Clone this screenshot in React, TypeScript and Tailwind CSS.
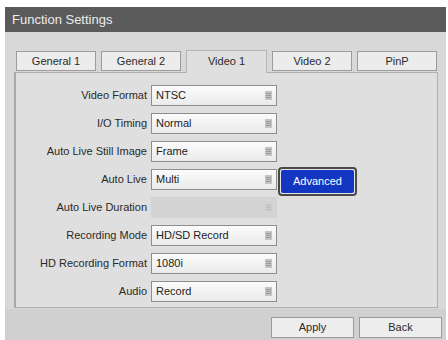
import React from "react";

const rows: { label: string; value: string; disabled?: boolean; advanced?: boolean }[] = [
  { label: "Video Format", value: "NTSC" },
  { label: "I/O Timing", value: "Normal" },
  { label: "Auto Live Still Image", value: "Frame" },
  { label: "Auto Live", value: "Multi", advanced: true },
  { label: "Auto Live Duration", value: "", disabled: true },
  { label: "Recording Mode", value: "HD/SD Record" },
  { label: "HD Recording Format", value: "1080i" },
  { label: "Audio", value: "Record" },
];

const tabs = ["General 1", "General 2", "Video 1", "Video 2", "PinP"];

function Grip({ faint }: { faint?: boolean }) {
  return (
    <div
      className={`w-[7px] h-[9px] flex flex-col justify-center gap-[1px] px-[1px] ${
        faint ? "bg-[#cfcfcf]" : "bg-[#c4c4c4]"
      }`}
    >
      <div className={`h-[1px] ${faint ? "bg-[#bdbdbd]" : "bg-[#9a9a9a]"}`} />
      <div className={`h-[1px] ${faint ? "bg-[#bdbdbd]" : "bg-[#9a9a9a]"}`} />
      <div className={`h-[1px] ${faint ? "bg-[#bdbdbd]" : "bg-[#9a9a9a]"}`} />
    </div>
  );
}

export default function App() {
  return (
    <div
      className="w-[448px] h-[340px] bg-white pl-[5px] pt-[7px] pr-[2px] overflow-hidden"
      style={{ fontFamily: "Arial, 'Liberation Sans', Helvetica, sans-serif" }}
    >
      <div className="flex flex-col h-full bg-[#d8d8d8]">
        <div className="h-[25px] shrink-0 bg-[#5b5b5b] text-[#ececec] text-[13px] leading-[25px] pl-[7px]">
          Function Settings
        </div>
        <div className="pl-[9px] pt-[18px]">
          <div className="flex items-end gap-[5px] pl-[2px] h-[22px]">
            {tabs.map((t, i) =>
              i === 2 ? (
                <div
                  key={t}
                  className="w-[81px] h-[23px] -mb-[1px] z-10 bg-[#dfdfdf] border border-b-0 border-[#b5b5b5] text-[11px] text-[#2a2a2a] flex items-center justify-center pb-[1px]"
                >
                  {t}
                </div>
              ) : (
                <div
                  key={t}
                  className="w-[80px] h-[20px] mb-[1px] bg-[#ececec] border border-[#9c9c9c] text-[11px] text-[#2a2a2a] flex items-center justify-center"
                >
                  {t}
                </div>
              )
            )}
          </div>
          <div className="w-[424px] h-[236px] bg-[#dfdfdf] border border-[#b0b0b0] border-l-2 border-l-[#a8a8a8] pt-[12px] flex flex-col gap-[7px]">
            {rows.map((r) => (
              <div key={r.label} className="flex items-center h-[21px]">
                <div className="w-[135px] text-right text-[11px] text-[#2a2a2a] pr-[4px]">{r.label}</div>
                <div
                  className={`w-[126px] h-[21px] flex items-center justify-between pl-[4px] pr-[4px] text-[11px] text-[#222] ${
                    r.disabled
                      ? "bg-[#d3d3d3] border border-[#d3d3d3]"
                      : "bg-gradient-to-b from-[#fbfbfb] to-[#ebebeb] border border-[#8e8e8e]"
                  }`}
                >
                  <span>{r.value}</span>
                  <Grip faint={r.disabled} />
                </div>
                {r.advanced && (
                  <div className="ml-[1px] mt-[3px] w-[79px] h-[29px] rounded-[4px] border-2 border-[#4a4a4a] bg-[#e6e6e6] p-[1px]">
                    <div className="w-full h-full rounded-[2px] bg-[#1236c2] text-white text-[11px] flex items-center justify-center">
                      Advanced
                    </div>
                  </div>
                )}
              </div>
            ))}
          </div>
        </div>
        <div className="flex-1 bg-[#d0d0d0] flex justify-end items-start pt-[8px] pr-[4px] gap-[5px] mt-[1px]">
          <div className="w-[83px] h-[21px] bg-[#ededed] border border-[#9a9a9a] text-[11px] text-[#2a2a2a] flex items-center justify-center">
            Apply
          </div>
          <div className="w-[83px] h-[21px] bg-[#ededed] border border-[#9a9a9a] text-[11px] text-[#2a2a2a] flex items-center justify-center">
            Back
          </div>
        </div>
      </div>
    </div>
  );
}
